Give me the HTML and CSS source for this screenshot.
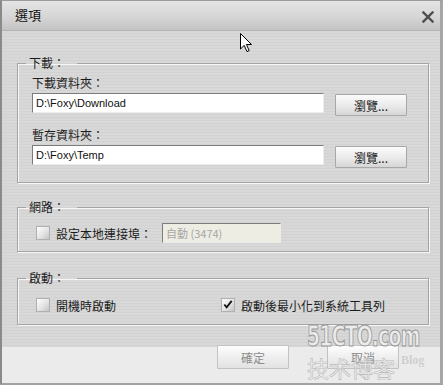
FILE: index.html
```html
<!DOCTYPE html>
<html lang="zh-Hant">
<head>
  <meta charset="UTF-8">
  <title>選項</title>
  <link rel="stylesheet" href="styles.css">
</head>
<body>
  <div class="window">
    <!-- title bar -->
    <div class="titlebar">
      <span class="title">選項</span>
      <svg class="close" width="12" height="12" viewBox="0 0 12 12">
        <path d="M1.5 1.5 L10.5 10.5 M10.5 1.5 L1.5 10.5" stroke="#4e4e4e" stroke-width="2.4" stroke-linecap="square"/>
      </svg>
    </div>

    <div class="content">
      <!-- download folders -->
      <fieldset class="group group-download">
        <legend>下載：</legend>
        <div class="field-label">下載資料夾：</div>
        <div class="path-row">
          <input class="textbox path" type="text" value="D:\Foxy\Download">
          <button class="btn browse">瀏覽...</button>
        </div>
        <div class="field-label next">暫存資料夾：</div>
        <div class="path-row">
          <input class="textbox path" type="text" value="D:\Foxy\Temp">
          <button class="btn browse">瀏覽...</button>
        </div>
      </fieldset>

      <!-- network -->
      <fieldset class="group group-network">
        <legend>網路：</legend>
        <div class="check-row">
          <label class="check-item">
            <span class="checkbox"></span>
            <span>設定本地連接埠：</span>
          </label>
          <input class="textbox port" type="text" value="自動 (3474)" disabled>
        </div>
      </fieldset>

      <!-- startup -->
      <fieldset class="group group-startup">
        <legend>啟動：</legend>
        <div class="check-row two-col">
          <label class="check-item">
            <span class="checkbox"></span>
            <span>開機時啟動</span>
          </label>
          <label class="check-item">
            <span class="checkbox checked">
              <svg width="13" height="13" viewBox="0 0 13 13">
                <path d="M2.5 6.5 L5 9.5 L10.5 2.5" fill="none" stroke="#111" stroke-width="2"/>
              </svg>
            </span>
            <span>啟動後最小化到系統工具列</span>
          </label>
        </div>
      </fieldset>
    </div>

    <div class="footer">
      <button class="btn footer-btn">確定</button>
      <button class="btn footer-btn">取消</button>
    </div>

    <!-- watermark of the source site -->
    <div class="watermark">
      <div class="wm-site">51CTO.com</div>
      <div class="wm-blog"><span class="wm-cn">技术博客</span><span class="wm-en">Blog</span></div>
    </div>

    <svg class="cursor" width="13" height="20" viewBox="0 0 13 20">
      <path d="M0.5 0.5 L0.5 16 L4.2 12.4 L7 18.6 L9.2 17.6 L6.4 11.5 L11.5 11.5 Z" fill="#fff" stroke="#000" stroke-width="1"/>
    </svg>
  </div>
</body>
</html>
```

FILE: styles.css
```css
body {
  margin: 0;
  font-family: "Noto Sans CJK TC", "Noto Sans CJK SC", sans-serif;
  font-size: 12px;
  color: #1c1c1c;
}

.window {
  position: relative;
  width: 443px;
  height: 385px;
  box-sizing: border-box;
  border-top: 1px solid #9c9c9c;
  border-left: 2px solid #8a8a8a;
  border-right: 3px solid #a6a6a6;
  border-bottom: 2px solid #a2a2a2;
  background:
    linear-gradient(to bottom, transparent 0, transparent 346px, #ebebeb 346px),
    repeating-linear-gradient(to bottom, #d8d8d8 0, #d8d8d8 2px, #d2d2d2 2px, #d2d2d2 3px);
  overflow: hidden;
}

.titlebar {
  height: 30px;
  box-sizing: border-box;
  display: flex;
  align-items: center;
  justify-content: space-between;
  padding: 0 6px 0 13px;
  background: linear-gradient(#e4e4e4, #d6d6d6 55%, #c3c3c3);
  border-bottom: 1px solid #b2b2b2;
}

.title {
  font-size: 13px;
  color: #111;
  margin-top: -2px;
}

.close {
  margin-top: 3px;
}

.content {
  padding: 24px 11px 0 15px;
}

.group {
  margin: 0;
  min-width: 0;
  padding: 3px 20px 14px 14px;
  border: 1px solid #a4a4a4;
  box-shadow: inset 1px 1px 0 #f6f6f6, 1px 1px 0 #f6f6f6;
}

.group legend {
  margin-left: -6px;
  padding: 0 12px 0 3px;
  line-height: 16px;
}

.group-network {
  margin-top: 16px;
  padding-top: 8px;
  padding-bottom: 8px;
}

.group-startup {
  margin-top: 18px;
  padding-top: 9px;
  padding-bottom: 9px;
}

.field-label {
  line-height: 18px;
}

.field-label.next {
  margin-top: 10px;
}

.path-row {
  display: flex;
  align-items: flex-start;
  gap: 11px;
  margin-top: 1px;
}

.textbox {
  box-sizing: border-box;
  height: 20px;
  margin: 0;
  padding: 0 0 0 3px;
  font-family: "Liberation Sans", Arial, sans-serif;
  font-size: 11px;
  color: #111;
  background: #fff;
  border: 1px solid;
  border-color: #7c7c7c #ececec #ececec #7c7c7c;
  outline: none;
}

.path {
  width: 292px;
}

.btn {
  box-sizing: border-box;
  margin: 0;
  padding: 0;
  font-family: "Noto Sans CJK TC", sans-serif;
  font-size: 12px;
  color: #1c1c1c;
  background: linear-gradient(#fbfbfb, #ececec 50%, #d6d6d6);
  border: 1px solid #a8a8a8;
  border-radius: 1px;
}

.browse {
  width: 72px;
  height: 22px;
  margin-top: 1px;
}

.check-row {
  display: flex;
  align-items: center;
  margin-left: 4px;
  height: 20px;
}

.check-row.two-col {
  display: grid;
  grid-template-columns: 185px auto;
}

.check-item {
  display: flex;
  align-items: center;
  gap: 6px;
}

.checkbox {
  width: 14px;
  height: 14px;
  box-sizing: border-box;
  border: 1px solid #b0b0b0;
  background: linear-gradient(135deg, #fdfdfd, #e4e4e4 55%, #c4c4c4);
  display: flex;
  align-items: center;
  justify-content: center;
}

.checkbox svg {
  margin-top: -1px;
}

.port {
  width: 119px;
  margin-left: 10px;
  font-size: 11px;
  color: #a6a6a6;
  background: #eeede3;
  font-family: "Noto Sans CJK TC", sans-serif;
}

.footer {
  display: flex;
  justify-content: flex-end;
  gap: 38px;
  margin-top: 20px;
  padding-right: 41px;
}

.footer-btn {
  width: 72px;
  height: 24px;
  color: #8c8c8c;
  border-color: #c2c2c2;
  background: linear-gradient(#fdfdfd, #efefef 50%, #e2e2e2);
}

.watermark {
  position: absolute;
  left: 305px;
  top: 321px;
  pointer-events: none;
}

.wm-site {
  font-family: "DejaVu Sans Condensed", "DejaVu Sans", sans-serif;
  font-weight: bold;
  font-size: 29px;
  line-height: 28px;
  letter-spacing: -1px;
  white-space: nowrap;
  color: rgba(240, 240, 240, 0.85);
  -webkit-text-stroke: 1px #969696;
  transform: scaleX(0.72);
  transform-origin: left top;
}

.wm-blog {
  display: flex;
  align-items: flex-start;
  gap: 6px;
  margin-top: 0;
}

.wm-cn {
  font-family: "Noto Sans CJK SC", sans-serif;
  font-size: 22px;
  line-height: 34px;
  color: rgba(250, 250, 250, 0.6);
  -webkit-text-stroke: 0.6px #b8b8b8;
}

.wm-en {
  font-family: "Liberation Serif", serif;
  font-weight: bold;
  font-size: 12px;
  line-height: 20px;
  color: rgba(200, 200, 200, 0.8);
}

.cursor {
  position: absolute;
  left: 238px;
  top: 32px;
}
```
